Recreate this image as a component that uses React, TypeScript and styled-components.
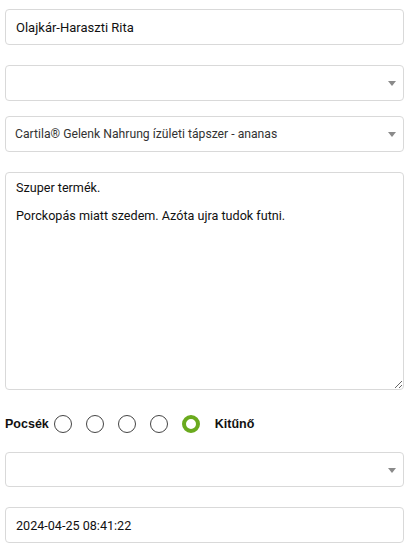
import React from "react";
import styled, { createGlobalStyle } from "styled-components";

const Global = createGlobalStyle`
  html, body { margin: 0; padding: 0; background: #fff; }
  body { font-family: Roboto, "Liberation Sans", sans-serif; }
  * { box-sizing: border-box; }
`;

const Form = styled.form`
  display: flex;
  flex-direction: column;
  width: 410px;
  padding: 9px 6px 0 5px;
`;

const Field = styled.div<{ $mb: number }>`
  position: relative;
  margin-bottom: ${(p) => p.$mb}px;
`;

const TextInput = styled.input<{ $fs?: number }>`
  display: block;
  width: 100%;
  height: 36px;
  border: 1px solid #d9d9d9;
  border-radius: 4px;
  padding: 0 10px;
  font-family: Roboto, "Liberation Sans", sans-serif;
  font-size: ${(p) => p.$fs ?? 13}px;
  color: #111;
  background: #fff;
  outline: none;
`;

const Select = styled.select<{ $h?: number }>`
  display: block;
  width: 100%;
  height: ${(p) => p.$h ?? 36}px;
  border: 1px solid #d9d9d9;
  border-radius: 4px;
  padding: 0 28px 0 9px;
  font-family: Roboto, "Liberation Sans", sans-serif;
  font-size: 12.2px;
  color: #333;
  background: #fff;
  appearance: none;
  -webkit-appearance: none;
  outline: none;
`;

const Caret = styled.span`
  position: absolute;
  right: 8px;
  top: 50%;
  margin-top: -2px;
  width: 0;
  height: 0;
  border-left: 4px solid transparent;
  border-right: 4px solid transparent;
  border-top: 5px solid #8a8a8a;
  pointer-events: none;
`;

const TextArea = styled.textarea`
  display: block;
  width: 100%;
  height: 218px;
  border: 1px solid #d9d9d9;
  border-radius: 4px;
  padding: 8px 10px;
  font-family: Roboto, "Liberation Sans", sans-serif;
  font-size: 12.6px;
  line-height: 14px;
  color: #111;
  background: #fff;
  resize: vertical;
  outline: none;
`;

const RatingRow = styled.div`
  display: flex;
  align-items: center;
  height: 18px;
  margin-bottom: 19px;
  font-family: "Liberation Sans", Arial, sans-serif;
`;

const RateLabel = styled.span<{ $ml: number; $mr: number }>`
  font-size: 12.5px;
  font-weight: bold;
  color: #111;
  margin-left: ${(p) => p.$ml}px;
  margin-right: ${(p) => p.$mr}px;
`;

const Radio = styled.span<{ $checked?: boolean }>`
  display: inline-block;
  width: 18px;
  height: 18px;
  border-radius: 50%;
  margin-right: 14px;
  border: ${(p) => (p.$checked ? "4px solid #6aaa1e" : "1px solid #444")};
  background: #fff;
`;

export default function App() {
  const ratings = [1, 2, 3, 4, 5];
  return (
    <>
      <Global />
      <Form onSubmit={(e) => e.preventDefault()}>
        <Field $mb={20}>
          <TextInput defaultValue="Olajkár-Haraszti Rita" />
        </Field>
        <Field $mb={15}>
          <Select defaultValue="">
            <option value=""></option>
          </Select>
          <Caret />
        </Field>
        <Field $mb={20}>
          <Select defaultValue="cartila">
            <option value="cartila">Cartila® Gelenk Nahrung ízületi tápszer - ananas</option>
          </Select>
          <Caret />
        </Field>
        <Field $mb={25}>
          <TextArea
            defaultValue={"Szuper termék.\n\nPorckopás miatt szedem. Azóta ujra tudok futni."}
          />
        </Field>
        <RatingRow>
          <RateLabel $ml={0} $mr={5}>Pocsék</RateLabel>
          {ratings.map((r) => (
            <Radio key={r} $checked={r === 5} />
          ))}
          <RateLabel $ml={1} $mr={0}>Kitűnő</RateLabel>
        </RatingRow>
        <Field $mb={20}>
          <Select defaultValue="" $h={35}>
            <option value=""></option>
          </Select>
          <Caret />
        </Field>
        <Field $mb={0}>
          <TextInput $fs={12.6} defaultValue="2024-04-25 08:41:22" />
        </Field>
      </Form>
    </>
  );
}
